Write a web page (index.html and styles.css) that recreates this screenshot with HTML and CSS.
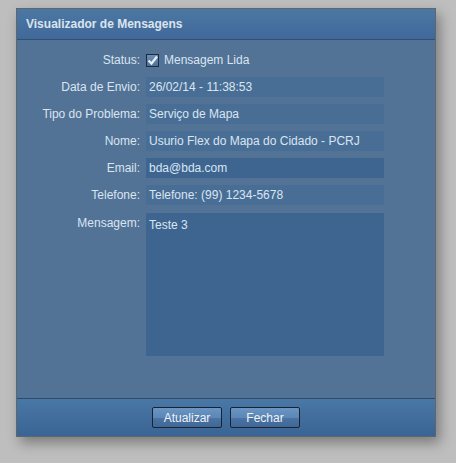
FILE: index.html
```html
<!DOCTYPE html>
<html>
<head>
<meta charset="utf-8">
<link rel="stylesheet" href="styles.css">
</head>
<body>
<div class="panel">
  <div class="header">Visualizador de Mensagens</div>
  <div class="body">
    <div class="row status">
      <span class="label">Status:</span>
      <div class="check">
        <span class="box"><svg width="11" height="11" viewBox="0 0 11 11"><path d="M1.5 5.5 L4.5 8.5 L10 1.5" fill="none" stroke="#e8f0f8" stroke-width="2.2"/></svg></span>
        <span class="checktext">Mensagem Lida</span>
      </div>
    </div>
    <div class="row"><span class="label">Data de Envio:</span><div class="field ro">26/02/14 - 11:38:53</div></div>
    <div class="row"><span class="label">Tipo do Problema:</span><div class="field ro">Serviço de Mapa</div></div>
    <div class="row"><span class="label">Nome:</span><div class="field ro">Usurio Flex do Mapa do Cidado - PCRJ</div></div>
    <div class="row"><span class="label">Email:</span><div class="field ed">bda@bda.com</div></div>
    <div class="row"><span class="label">Telefone:</span><div class="field ro">Telefone: (99) 1234-5678</div></div>
    <div class="row msg"><span class="label">Mensagem:</span><div class="field ed area">Teste 3</div></div>
  </div>
  <div class="footer">
    <button class="btn">Atualizar</button>
    <button class="btn">Fechar</button>
  </div>
</div>
</body>
</html>
```
FILE: styles.css
```css
html, body { margin: 0; padding: 0; }
body {
  background: #bebebe;
  width: 456px;
  height: 463px;
  font-family: "Liberation Sans", Arial, sans-serif;
  font-size: 12px;
  padding-top: 8px;
  padding-left: 16px;
  box-sizing: border-box;
}
.panel {
  width: 420px;
  border: 1px solid #5d6770;
  box-sizing: border-box;
  background: #527296;
  box-shadow: 4px 6px 12px rgba(0,0,0,0.35);
  display: flex;
  flex-direction: column;
}
.header {
  height: 31px;
  box-sizing: border-box;
  border-bottom: 1px solid #2f5075;
  background: linear-gradient(#4c77a3, #40699a);
  color: #dbe4ee;
  font-weight: bold;
  font-size: 12px;
  padding: 8px 0 0 9px;
}
.body {
  height: 358px;
  padding-top: 13px;
  box-sizing: border-box;
  display: flex;
  flex-direction: column;
  gap: 7px;
}
.row {
  display: flex;
  align-items: flex-start;
  gap: 6px;
}
.label {
  width: 123px;
  text-align: right;
  color: #d9e5f1;
  line-height: 20px;
}
.status .label { line-height: 14px; }
.status { margin-bottom: 3px; }
.msg { margin-top: 1px; }
.check { display: flex; align-items: center; gap: 5px; }
.box {
  width: 11px; height: 11px;
  border: 1px solid #1d2b3a;
  background: linear-gradient(#6c8db3, #4c719c);
  display: flex;
}
.checktext { color: #d9e5f1; line-height: 14px; }
.field {
  width: 238px;
  height: 20px;
  box-sizing: border-box;
  padding-left: 3px;
  line-height: 20px;
  color: #d9e5f1;
}
.ro { background: #496e95; }
.ed { background: #3e6590; }
.area { height: 143px; line-height: 16px; padding-top: 4px; }
.footer {
  height: 38px;
  box-sizing: border-box;
  border-top: 1px solid #2f4a68;
  background: linear-gradient(#4977a6, #3a6494);
  display: flex;
  justify-content: center;
  align-items: center;
  gap: 8px;
}
.btn {
  width: 70px;
  height: 21px;
  border: 1px solid #1a2430;
  border-radius: 2px;
  background: linear-gradient(#6b95c2 0%, #5c87b6 50%, #4a74a3 51%, #3f6898 100%);
  color: #eef3f8;
  font-family: "Liberation Sans", Arial, sans-serif;
  font-size: 12px;
  padding: 0;
}
```
